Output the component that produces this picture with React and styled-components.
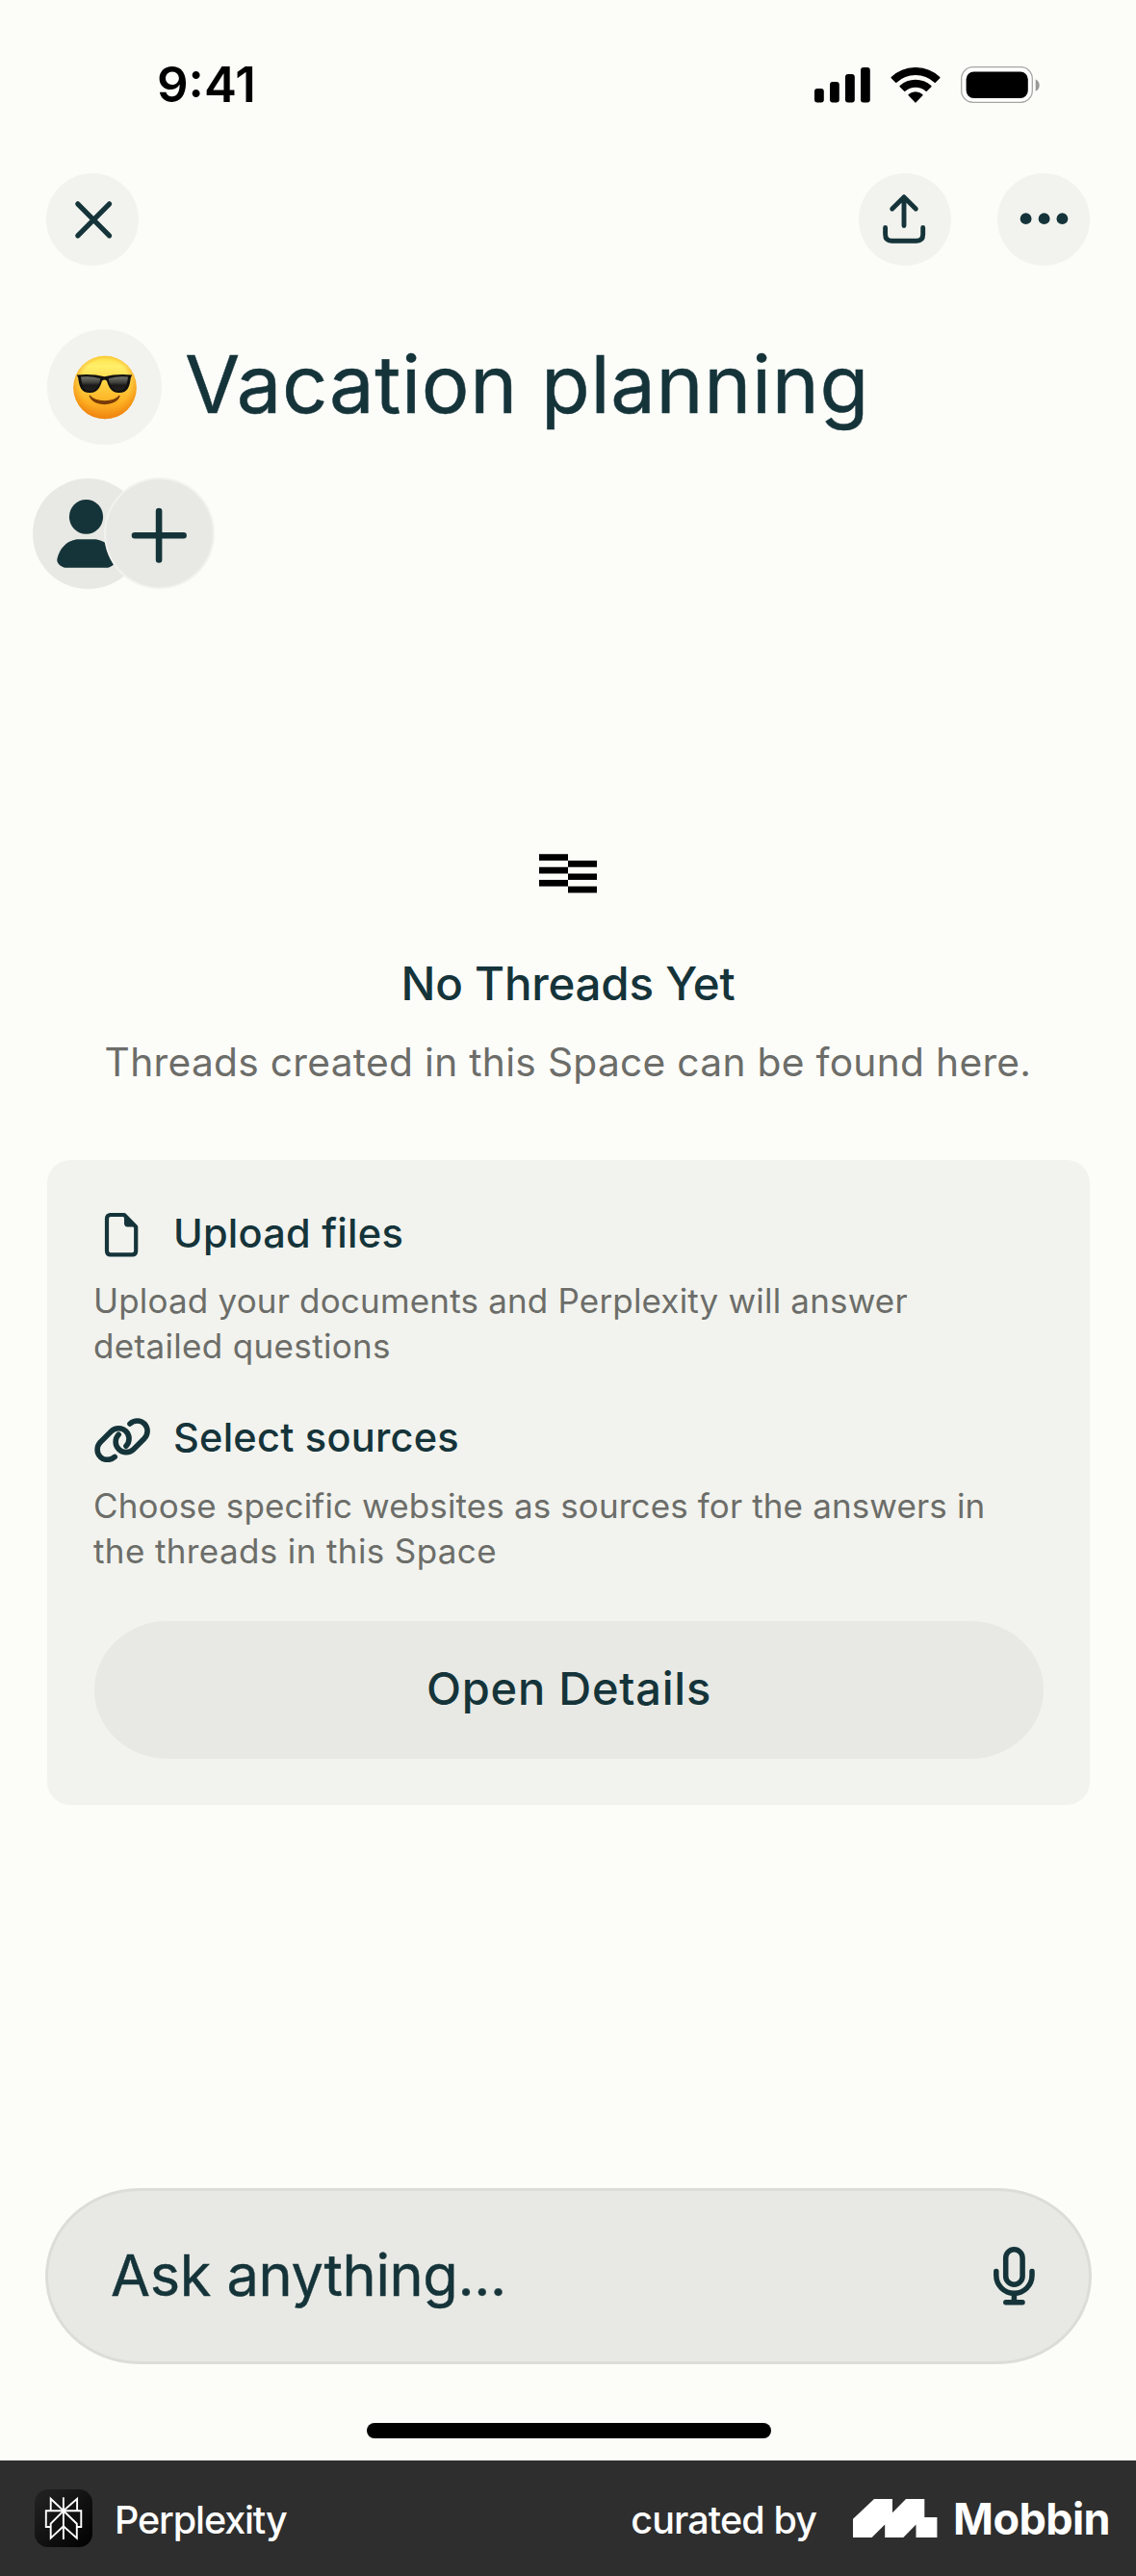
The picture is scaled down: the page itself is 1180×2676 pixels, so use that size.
import React from 'react';
import styled, { createGlobalStyle } from 'styled-components';

const ink = '#15343a';
const muted = '#6c6d69';
const paper = '#fcfcf9';
const surface = '#f2f3ee';
const control = '#e8e9e4';

const GlobalStyle = createGlobalStyle`
  *, *::before, *::after { box-sizing: border-box; }
  body {
    margin: 0;
    background: ${paper};
    color: ${ink};
    font-family: "Inter", "Liberation Sans", sans-serif;
  }
  button { font: inherit; color: inherit; border: 0; padding: 0; cursor: pointer; }
  h1, h2, h3, p { margin: 0; font-weight: 400; }
  svg { display: block; flex: none; }
`;

const Page = styled.div`
  width: 1180px;
  display: flex;
  flex-direction: column;
`;

const Screen = styled.main`
  height: 2556px;
  display: flex;
  flex-direction: column;
  background: ${paper};
`;

const StatusBar = styled.header`
  height: 176px;
  padding: 0 99px 0 163px;
  display: flex;
  align-items: center;
  justify-content: space-between;
  color: #000;
`;

const Clock = styled.time`
  font-size: 51px;
  font-weight: 600;
  line-height: 60px;
`;

const StatusIcons = styled.div`
  display: flex;
  align-items: center;
  gap: 21px;
`;

const Toolbar = styled.nav`
  margin-top: 4px;
  padding: 0 48px;
  display: flex;
  justify-content: space-between;
`;

const ToolbarGroup = styled.div`
  display: flex;
  gap: 48px;
`;

const RoundButton = styled.button`
  width: 96px;
  height: 96px;
  border-radius: 50%;
  background: ${surface};
  display: flex;
  align-items: center;
  justify-content: center;
`;

const TitleRow = styled.div`
  margin-top: 66px;
  padding-left: 49px;
  display: flex;
  align-items: center;
  gap: 24px;
`;

const EmojiBadge = styled.div`
  width: 119px;
  height: 120px;
  border-radius: 50%;
  background: ${surface};
  display: flex;
  align-items: center;
  justify-content: center;
`;

const Title = styled.h1`
  padding-bottom: 6px;
  font-size: 83px;
  line-height: 100px;
  letter-spacing: 0.68px;
  white-space: nowrap;
  -webkit-text-stroke: 0.5px currentColor;
`;

const Members = styled.div`
  height: 116px;
  margin-top: 34px;
  padding-left: 34px;
  display: flex;
  align-items: center;
`;

const Avatar = styled.div`
  width: 115px;
  height: 115px;
  border-radius: 50%;
  background: ${control};
  display: flex;
  align-items: center;
  justify-content: center;
`;

const AddMember = styled(RoundButton)`
  width: 115px;
  height: 116px;
  margin-left: -41px;
  border: 2px solid #f2f3ef;
  background: ${control};
`;

const EmptyState = styled.section`
  margin-top: 275px;
  display: flex;
  flex-direction: column;
  align-items: center;
`;

const EmptyTitle = styled.h2`
  margin-top: 63.5px;
  font-size: 47.5px;
  font-weight: 500;
  line-height: 60px;
  letter-spacing: -0.24px;
`;

const EmptyText = styled.p`
  margin-top: 26px;
  color: ${muted};
  font-size: 40.7px;
  line-height: 52px;
  letter-spacing: 0.3px;
  white-space: nowrap;
`;

const Card = styled.section`
  width: 1083px;
  margin: 75px 0 0 49px;
  padding: 50px 48px 48.5px 49px;
  border-radius: 24px;
  background: ${surface};
  display: flex;
  flex-direction: column;
`;

const Feature = styled.article`
  & + & { margin-top: 45px; }
`;

const FeatureHead = styled.div`
  display: flex;
  align-items: center;
  gap: 24px;
`;

const FeatureTitle = styled.h3`
  font-size: 41.5px;
  font-weight: 500;
  line-height: 52px;
  letter-spacing: 0.24px;
`;

const FeatureText = styled.p`
  margin: 21.5px 0 0 -1px;
  color: ${muted};
  font-size: 35px;
  line-height: 47px;
  white-space: nowrap;
`;

const TextLine = styled.span`
  display: block;
  letter-spacing: ${p => p.$tracking}px;
`;

const DetailsButton = styled.button`
  height: 143px;
  margin-top: 49px;
  padding-bottom: 3px;
  border-radius: 76px / 71.5px;
  background: ${control};
  font-size: 47px;
  font-weight: 500;
  letter-spacing: 0.76px;
`;

const Composer = styled.div`
  width: 1087px;
  height: 183px;
  margin: 398px 0 0 47px;
  padding: 0 55px 0 65px;
  border: 3px solid #dcddd8;
  border-radius: 98px / 91.5px;
  background: ${control};
  display: flex;
  align-items: center;
  justify-content: space-between;
`;

const Prompt = styled.span`
  padding-bottom: 3px;
  font-size: 59.5px;
  line-height: 72px;
  letter-spacing: -0.34px;
  -webkit-text-stroke: 0.4px currentColor;
`;

const HomeIndicator = styled.div`
  width: 420px;
  height: 15.5px;
  margin: 61px 0 0 381px;
  border-radius: 8px;
  background: #000;
`;

const Footer = styled.footer`
  height: 120px;
  padding: 0 27px 0 36px;
  display: flex;
  align-items: center;
  justify-content: space-between;
  background: #2e2e2e;
  color: #fff;
`;

const FooterGroup = styled.div`
  display: flex;
  align-items: center;
`;

const AppIcon = styled.div`
  width: 60px;
  height: 60px;
  margin-right: 23px;
  border-radius: 14px;
  background: linear-gradient(135deg, #242424, #000);
`;

const FooterLabel = styled.span`
  padding-top: 3px;
  font-size: 39.5px;
  font-weight: 500;
  line-height: 48px;
  letter-spacing: ${p => p.$tracking}px;
`;

const Brand = styled.span`
  padding-top: 1px;
  font-size: 45px;
  font-weight: 700;
  line-height: 54px;
  letter-spacing: -0.59px;
`;

const MarkSlot = styled.div`
  margin: 0 16px 0 38px;
`;

const SignalIcon = () => (
  <svg width="58" height="37" viewBox="0 0 58 37" fill="currentColor">
    <rect x="0" y="22" width="9.8" height="14.5" rx="3" />
    <rect x="16" y="15" width="9.8" height="21.5" rx="3" />
    <rect x="32" y="7" width="9.8" height="29.5" rx="3" />
    <rect x="48" y="0" width="9.8" height="36.5" rx="3" />
  </svg>
);

const WifiIcon = () => (
  <svg width="52" height="37" viewBox="0 0 52 37" fill="currentColor" stroke="currentColor" strokeWidth="1.6" strokeLinejoin="round">
    <path d="M1.3 10.6A36 36 0 0 1 50.7 10.6L46.2 15.2A29.5 29.5 0 0 0 5.8 15.2Z" />
    <path d="M10.2 19.6A23.4 23.4 0 0 1 41.8 19.6L37.2 24.2A17 17 0 0 0 14.8 24.2Z" />
    <path d="M19.2 28.6A10.5 10.5 0 0 1 32.8 28.6L26 35.8Z" />
  </svg>
);

const BatteryIcon = () => (
  <svg width="83" height="38" viewBox="0 0 83 38">
    <rect x="0.7" y="0.7" width="73.6" height="36.6" rx="12" fill="#fff" stroke="#a5a5a3" strokeWidth="1.3" />
    <rect x="5.6" y="5.4" width="64.2" height="27.6" rx="8" fill="#000" />
    <path d="M77.7 13.2C83 15.8 83 23.2 77.7 25.8Z" fill="#999997" />
  </svg>
);

const CloseIcon = () => (
  <svg width="96" height="96" viewBox="0 0 96 96" fill="none" stroke={ink} strokeWidth="5.2" strokeLinecap="round">
    <path d="M32.8 31.8L65.6 64.8M65.6 31.8L32.8 64.8" />
  </svg>
);

const ShareIcon = () => (
  <svg width="96" height="96" viewBox="0 0 96 96" fill="none" stroke={ink} strokeWidth="4.9" strokeLinecap="round" strokeLinejoin="round">
    <path d="M47 54.5V25M34.7 37L47 24.7L59.3 37" />
    <path d="M27.6 56.5V63.5Q27.6 70.2 34.3 70.2H60Q66.7 70.2 66.7 63.5V56.5" />
  </svg>
);

const MoreIcon = () => (
  <svg width="96" height="96" viewBox="0 0 96 96" fill={ink}>
    <circle cx="29.6" cy="47.2" r="5.9" />
    <circle cx="48.6" cy="47.2" r="5.9" />
    <circle cx="67.4" cy="47.2" r="5.9" />
  </svg>
);

const SunglassesFace = () => (
  <svg width="66" height="67" viewBox="0 0 66 67">
    <defs>
      <linearGradient id="face" x1="0" y1="0" x2="0" y2="1">
        <stop offset="0" stopColor="#fde043" />
        <stop offset="0.16" stopColor="#fff06a" />
        <stop offset="0.45" stopColor="#fed041" />
        <stop offset="0.75" stopColor="#fdb022" />
        <stop offset="1" stopColor="#f28d1c" />
      </linearGradient>
      <radialGradient id="rim" cx="0.5" cy="0.45" r="0.55">
        <stop offset="0.7" stopColor="#f79410" stopOpacity="0" />
        <stop offset="1" stopColor="#ee7f0d" stopOpacity="0.8" />
      </radialGradient>
      <linearGradient id="lens" x1="0" y1="0" x2="0" y2="1">
        <stop offset="0" stopColor="#77776f" />
        <stop offset="0.45" stopColor="#3b3b38" />
        <stop offset="0.6" stopColor="#1b1a19" />
        <stop offset="1" stopColor="#222120" />
      </linearGradient>
    </defs>
    <circle cx="33" cy="33.5" r="32.8" fill="url(#face)" />
    <circle cx="33" cy="33.5" r="32.8" fill="url(#rim)" />
    <path d="M17.2 42.2C20.5 53.4 44.5 53.4 48 42.2C42.5 49.8 23 49.8 17.2 42.2Z" fill="#7a3b06" stroke="#7a3b06" strokeWidth="1.2" strokeLinejoin="round" />
    <path d="M3.8 20.4Q20 18.8 32.5 22.2Q45 18.8 61.2 20.4L59.8 23.5C58.5 33 57 39 47.5 39C39.5 39 37 33 35.2 27.2Q34.6 25.4 32.5 25.4Q30.4 25.4 29.8 27.2C28 33 25.5 39 17.5 39C8 39 6.5 33 5.2 23.5Z" fill="#121111" />
    <path d="M8 22.6Q18 21.3 28.3 24.2C27.5 31 24 37 17.5 37C9.8 37 9 30 8 22.6Z" fill="url(#lens)" />
    <path d="M57 22.6Q47 21.3 36.7 24.2C37.5 31 41 37 47.5 37C55.2 37 56 30 57 22.6Z" fill="url(#lens)" />
  </svg>
);

const PersonIcon = () => (
  <svg width="115" height="115" viewBox="0 0 115 115" fill={ink}>
    <ellipse cx="55.5" cy="39.9" rx="17.6" ry="17.9" />
    <path d="M33.8 92.7C30 92.7 24.8 88.2 25.3 84.6C27.2 72.6 36.5 63.3 48 63.3H63.4C75 63.3 84.2 72.6 86.1 84.6C86.6 88.2 81.4 92.7 77.6 92.7Z" />
  </svg>
);

const PlusIcon = () => (
  <svg width="109" height="110" viewBox="0 0 109 110" fill="none" stroke={ink} strokeWidth="6.6" strokeLinecap="round">
    <path d="M29 57.2H79.6M54.1 32V82.5" />
  </svg>
);

const ThreadsIcon = () => (
  <svg width="60" height="41" viewBox="0 0 60 41" fill="#000">
    <path d="M0 0.3H30V7H0ZM0 13.7H30V20.4H0ZM0 27.1H30V33.8H0ZM30 7H60V13.7H30ZM30 20.4H60V27.1H30ZM30 33.8H60V40.5H30Z" />
  </svg>
);

const FileIcon = () => (
  <svg width="58" height="52" viewBox="0 0 58 52">
    <path
      d="M16.2 7H31L43.2 19.4V44.5Q43.2 48.4 39.3 48.4H16.9Q13 48.4 13 44.5V10.9Q13 7 16.9 7Z"
      fill="none" stroke={ink} strokeWidth="4.2" strokeLinejoin="round"
    />
    <path d="M31 6L44 19.4H34.6Q31 19.4 31 15.8Z" fill={ink} />
  </svg>
);

const LinkIcon = () => (
  <svg width="58" height="52" viewBox="0 0 58 52" fill="none" stroke={ink} strokeWidth="5.6" strokeLinecap="round">
    <path d="M21.2 46.4C16.8 50.4 10.2 50.4 6.2 46.4C2 42 2.2 35.6 6.2 31.2L17.4 20C21.6 15.8 28.6 15.6 32.8 19.8C37 24 37.2 30.6 33 35.2" />
    <path d="M37 12C41.4 8 48 8 52 12C56.2 16.4 56 22.8 52 27.2L40.8 38.4C36.6 42.6 29.6 42.8 25.4 38.6C21.2 34.4 21 27.8 25.2 23.2" />
  </svg>
);

const MicIcon = () => (
  <svg width="44" height="61" viewBox="0 0 44 61" fill="none" stroke={ink} strokeWidth="5.5" strokeLinecap="round">
    <rect x="12.7" y="2.8" width="17.4" height="36.4" rx="8.7" />
    <path d="M2.8 25.6V29.5C2.8 40 11 48.3 21.4 48.3C31.8 48.3 40 40 40 29.5V25.6" />
    <path d="M21.4 49V57M12.8 57.8H30" />
  </svg>
);

const PerplexityMark = () => (
  <svg width="60" height="60" viewBox="0 0 60 60" fill="none" stroke="#fff" strokeWidth="1.9">
    <path d="M29.9 8.3V52" />
    <path d="M16.7 22.3V9.8L29.9 22.3L44.1 9.8V22.3" />
    <path d="M16.7 39H11.8V22.3H48.3V39H43.8" />
    <path d="M29.9 22.3L16.7 35.7V50.6L29.9 38.4L43.8 50.6V35.7L29.9 22.3" />
  </svg>
);

const MobbinMark = () => (
  <svg width="88" height="40" viewBox="0 0 88 40" fill="#fff">
    <path d="M0 20.8L22 0H41V14.2L55 0H74.3V19H87.4V40H65.5V26.5L52.3 40H33.2V26.5L19.6 40H0Z" />
  </svg>
);

const features = [
  {
    title: 'Upload files',
    Icon: FileIcon,
    lines: [
      { text: 'Upload your documents and Perplexity will answer', tracking: 0.18 },
      { text: 'detailed questions', tracking: 0.34 },
    ],
  },
  {
    title: 'Select sources',
    Icon: LinkIcon,
    lines: [
      { text: 'Choose specific websites as sources for the answers in', tracking: 0.13 },
      { text: 'the threads in this Space', tracking: 0.38 },
    ],
  },
];

export default function App() {
  return (
    <Page>
      <GlobalStyle />
      <Screen>
        <StatusBar>
          <Clock>9:41</Clock>
          <StatusIcons>
            <SignalIcon />
            <WifiIcon />
            <BatteryIcon />
          </StatusIcons>
        </StatusBar>

        <Toolbar>
          <RoundButton aria-label="Close"><CloseIcon /></RoundButton>
          <ToolbarGroup>
            <RoundButton aria-label="Share"><ShareIcon /></RoundButton>
            <RoundButton aria-label="More"><MoreIcon /></RoundButton>
          </ToolbarGroup>
        </Toolbar>

        <TitleRow>
          <EmojiBadge><SunglassesFace /></EmojiBadge>
          <Title>Vacation planning</Title>
        </TitleRow>

        <Members>
          <Avatar><PersonIcon /></Avatar>
          <AddMember aria-label="Add member"><PlusIcon /></AddMember>
        </Members>

        <EmptyState>
          <ThreadsIcon />
          <EmptyTitle>No Threads Yet</EmptyTitle>
          <EmptyText>Threads created in this Space can be found here.</EmptyText>
        </EmptyState>

        <Card>
          {features.map(({ title, Icon, lines }) => (
            <Feature key={title}>
              <FeatureHead>
                <Icon />
                <FeatureTitle>{title}</FeatureTitle>
              </FeatureHead>
              <FeatureText>
                {lines.map(line => (
                  <TextLine key={line.text} $tracking={line.tracking}>{line.text}</TextLine>
                ))}
              </FeatureText>
            </Feature>
          ))}
          <DetailsButton>Open Details</DetailsButton>
        </Card>

        <Composer>
          <Prompt>Ask anything...</Prompt>
          <MicIcon />
        </Composer>

        <HomeIndicator />
      </Screen>

      <Footer>
        <FooterGroup>
          <AppIcon><PerplexityMark /></AppIcon>
          <FooterLabel $tracking={-1.11}>Perplexity</FooterLabel>
        </FooterGroup>
        <FooterGroup>
          <FooterLabel $tracking={-0.89}>curated by</FooterLabel>
          <MarkSlot><MobbinMark /></MarkSlot>
          <Brand>Mobbin</Brand>
        </FooterGroup>
      </Footer>
    </Page>
  );
}
